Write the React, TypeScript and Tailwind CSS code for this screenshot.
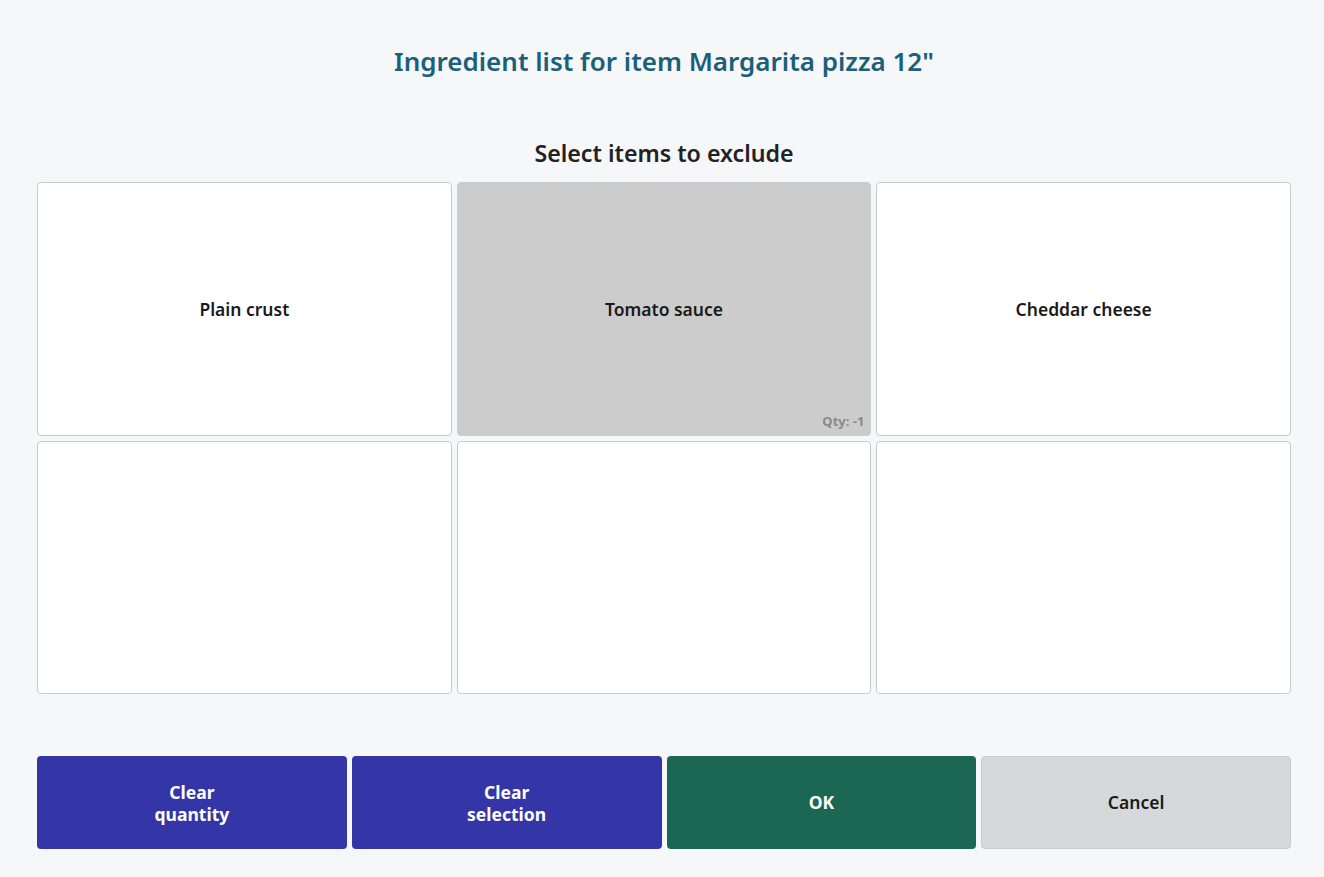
import React from "react";

const tiles = [
  { label: "Plain crust", selected: false },
  { label: "Tomato sauce", selected: true, qty: "Qty: -1" },
  { label: "Cheddar cheese", selected: false },
  { label: "", selected: false },
  { label: "", selected: false },
  { label: "", selected: false },
];

export default function App() {
  return (
    <div
      className="w-[1324px] h-[877px] bg-[#f6f7f9] flex flex-col pl-[37px] pr-[33px] text-[#1c1c1c]"
      style={{ fontFamily: '"Noto Sans", "Open Sans", sans-serif' }}
    >
      <div className="h-[125px] flex items-start justify-center pt-[43px]">
        <h1 className="text-[26px] font-semibold text-[#1b6079] leading-[36px]">
          Ingredient list for item Margarita pizza 12"
        </h1>
      </div>
      <div className="h-[57px] flex items-start justify-center pt-[13px]">
        <h2 className="text-[23.2px] font-semibold text-[#222] leading-[30px]">Select items to exclude</h2>
      </div>
      <div className="grid grid-cols-3 grid-rows-2 gap-[5px] h-[512px]">
        {tiles.map((t, i) => (
          <div
            key={i}
            className={
              "relative flex items-center justify-center rounded-[4px] border " +
              (t.selected ? "bg-[#cccccc] border-[#cccccc]" : "bg-white border-[#c9cbcd]")
            }
          >
            <span className="text-[17.5px] font-semibold text-[#1a1a1a] leading-[24px]">{t.label}</span>
            {t.qty && (
              <span className="absolute right-[6px] bottom-[3px] text-[13px] font-bold text-[#8a8a8a]">
                {t.qty}
              </span>
            )}
          </div>
        ))}
      </div>
      <div className="grid grid-cols-4 gap-[5px] h-[93px] mt-[62px]">
        <button className="rounded-[4px] bg-[#3436a8] text-white text-[17.5px] font-bold leading-[22px]">
          Clear
          <br />
          quantity
        </button>
        <button className="rounded-[4px] bg-[#3436a8] text-white text-[17.5px] font-bold leading-[22px]">
          Clear
          <br />
          selection
        </button>
        <button className="rounded-[4px] bg-[#1c6753] text-white text-[17.5px] font-bold">OK</button>
        <button className="rounded-[4px] bg-[#d6d9db] border border-[#c9cbcd] text-[#1a1a1a] text-[17.5px] font-semibold">
          Cancel
        </button>
      </div>
    </div>
  );
}
